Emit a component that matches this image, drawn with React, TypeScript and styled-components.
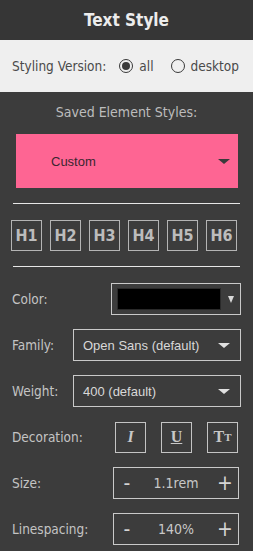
import { useState } from 'react';
import styled, { createGlobalStyle } from 'styled-components';

const GlobalStyle = createGlobalStyle`
  html, body {
    margin: 0;
    padding: 0;
    background: #3c3c3c;
  }
`;

const Panel = styled.div`
  width: 253px;
  height: 551px;
  background: #3c3c3c;
  font-family: "DejaVu Sans Condensed", "DejaVu Sans", sans-serif;
  color: #c8c8c8;
  overflow: hidden;
`;

const Header = styled.div`
  height: 40px;
  background: #363636;
  display: flex;
  align-items: center;
  justify-content: center;
  font-size: 17px;
  font-weight: bold;
  color: #ececec;
`;

const VersionBar = styled.div`
  height: 52px;
  background: #efefef;
  display: flex;
  align-items: center;
  padding-left: 12px;
  font-size: 13.5px;
  color: #4a4a4a;
`;

const Radio = styled.label<{ $first?: boolean }>`
  display: flex;
  align-items: center;
  margin-left: ${(p) => (p.$first ? '13px' : '17px')};
  gap: 6px;
`;

const Circle = styled.span<{ $on?: boolean }>`
  width: 12px;
  height: 12px;
  border-radius: 50%;
  border: 1px solid #3a3a3a;
  display: flex;
  align-items: center;
  justify-content: center;
  &::after {
    content: '';
    display: ${(p) => (p.$on ? 'block' : 'none')};
    width: 8px;
    height: 8px;
    border-radius: 50%;
    background: #3a3a3a;
  }
`;

const SectionLabel = styled.div`
  text-align: center;
  font-size: 14px;
  color: #bdbdbd;
  margin-top: 12px;
`;

const SavedSelect = styled.div`
  margin: 14px 15px 0 16px;
  height: 54px;
  background: #fe6593;
  display: flex;
  align-items: center;
  justify-content: space-between;
  padding: 0 8px 0 35px;
  font-family: "Liberation Sans", Arial, sans-serif;
  font-size: 13px;
  color: #3a2530;
`;

const Caret = styled.span<{ $color?: string; $size?: number; $h?: number; $right?: number; $left?: number }>`
  display: block;
  flex: none;
  width: 0;
  height: 0;
  margin-left: ${(p) => p.$left ?? 0}px;
  margin-right: ${(p) => p.$right ?? 0}px;
  border-left: ${(p) => p.$size ?? 6}px solid transparent;
  border-right: ${(p) => p.$size ?? 6}px solid transparent;
  border-top: ${(p) => p.$h ?? (p.$size ?? 6) - 1}px solid ${(p) => p.$color ?? '#3a3a3a'};
`;

const Divider = styled.div<{ $top: number }>`
  margin: ${(p) => p.$top}px 13px 0 13px;
  height: 1px;
  background: #e6e6e6;
`;

const HeadingRow = styled.div`
  display: flex;
  gap: 8px;
  padding-left: 11px;
  margin-top: 16px;
`;

const HButton = styled.button`
  width: 31px;
  height: 31px;
  box-sizing: border-box;
  background: transparent;
  border: 1px solid #b4b4b4;
  color: #bcbcbc;
  font-family: inherit;
  font-weight: bold;
  font-size: 16px;
  padding: 0;
  display: flex;
  align-items: center;
  justify-content: center;
`;

const Rows = styled.div`
  margin-top: 16px;
  display: flex;
  flex-direction: column;
  gap: 14px;
`;

const Row = styled.div`
  display: flex;
  align-items: center;
  height: 32px;
  padding-left: 12px;
  font-size: 13.5px;
`;

const Label = styled.div`
  flex: 1;
  color: #c4c4c4;
`;

const Box = styled.div<{ $width: number; $right?: number }>`
  width: ${(p) => p.$width}px;
  height: 100%;
  box-sizing: border-box;
  border: 1px solid #c9c9c9;
  margin-right: ${(p) => p.$right ?? 12}px;
  display: flex;
  align-items: center;
`;

const Swatch = styled.div`
  width: 104px;
  height: 22px;
  margin-left: 5px;
  background: #000;
  border: 1px solid #2a2a2a;
  box-sizing: border-box;
`;

const SelectText = styled.div`
  flex: 1;
  padding-left: 9px;
  font-family: "Liberation Sans", Arial, sans-serif;
  font-size: 13px;
  color: #d8d8d8;
`;

const DecoGroup = styled.div`
  display: flex;
  gap: 15px;
  margin-right: 15px;
`;

const DecoButton = styled.button`
  width: 31px;
  height: 31px;
  box-sizing: border-box;
  background: transparent;
  border: 1px solid #c4c4c4;
  color: #c8c8c8;
  font-family: "Liberation Serif", "DejaVu Serif", serif;
  font-weight: bold;
  font-size: 16px;
  padding: 0;
  display: flex;
  align-items: center;
  justify-content: center;
`;

const Small = styled.span`
  font-size: 11px;
`;

const StepBtn = styled.span`
  width: 26px;
  text-align: center;
  font-size: 21px;
  color: #d4d4d4;
`;

const StepValue = styled.div`
  flex: 1;
  text-align: center;
  font-size: 14px;
  color: #c8c8c8;
`;

function Stepper({ value }: { value: string }) {
  return (
    <Box $width={126} $right={14}>
      <StepBtn>-</StepBtn>
      <StepValue>{value}</StepValue>
      <StepBtn>+</StepBtn>
    </Box>
  );
}

function Dropdown({ text }: { text: string }) {
  return (
    <Box $width={168}>
      <SelectText>{text}</SelectText>
      <Caret $color="#e0e0e0" $right={10} />
    </Box>
  );
}

export default function App() {
  const [version, setVersion] = useState('all');

  return (
    <Panel>
      <GlobalStyle />
      <Header>Text Style</Header>
      <VersionBar>
        Styling Version:
        <Radio $first onClick={() => setVersion('all')}>
          <Circle $on={version === 'all'} />
          all
        </Radio>
        <Radio onClick={() => setVersion('desktop')}>
          <Circle $on={version === 'desktop'} />
          desktop
        </Radio>
      </VersionBar>

      <SectionLabel>Saved Element Styles:</SectionLabel>
      <SavedSelect>
        Custom
        <Caret />
      </SavedSelect>

      <Divider $top={15} />

      <HeadingRow>
        {['H1', 'H2', 'H3', 'H4', 'H5', 'H6'].map((h) => (
          <HButton key={h}>{h}</HButton>
        ))}
      </HeadingRow>

      <Divider $top={15} />

      <Rows>
        <Row>
          <Label>Color:</Label>
          <Box $width={130}>
            <Swatch />
            <Caret $color="#d8d8d8" $size={3.5} $h={7} $left={7} />
          </Box>
        </Row>
        <Row>
          <Label>Family:</Label>
          <Dropdown text="Open Sans (default)" />
        </Row>
        <Row>
          <Label>Weight:</Label>
          <Dropdown text="400 (default)" />
        </Row>
        <Row>
          <Label>Decoration:</Label>
          <DecoGroup>
            <DecoButton><i>I</i></DecoButton>
            <DecoButton><u>U</u></DecoButton>
            <DecoButton>T<Small>T</Small></DecoButton>
          </DecoGroup>
        </Row>
        <Row>
          <Label>Size:</Label>
          <Stepper value="1.1rem" />
        </Row>
        <Row>
          <Label>Linespacing:</Label>
          <Stepper value="140%" />
        </Row>
      </Rows>
    </Panel>
  );
}
